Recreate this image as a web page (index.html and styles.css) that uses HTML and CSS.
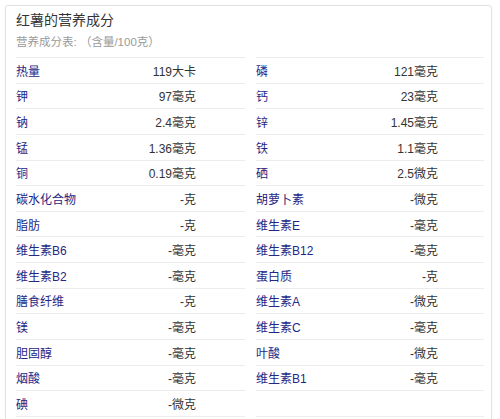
FILE: index.html
```html
<!DOCTYPE html>
<html lang="zh">
<head>
<meta charset="utf-8">
<title>红薯的营养成分</title>
<link rel="stylesheet" href="styles.css">
</head>
<body>
<div class="card">
  <h2 class="title">红薯的营养成分</h2>
  <div class="subtitle">营养成分表: （含量/100克）</div>
  <div class="table">
    <div class="col">
      <div class="row"><span class="k">热量</span><span class="v">119大卡</span></div>
      <div class="row"><span class="k">钾</span><span class="v">97毫克</span></div>
      <div class="row"><span class="k">钠</span><span class="v">2.4毫克</span></div>
      <div class="row"><span class="k">锰</span><span class="v">1.36毫克</span></div>
      <div class="row"><span class="k">铜</span><span class="v">0.19毫克</span></div>
      <div class="row"><span class="k">碳水化合物</span><span class="v">-克</span></div>
      <div class="row"><span class="k">脂肪</span><span class="v">-克</span></div>
      <div class="row"><span class="k">维生素B6</span><span class="v">-毫克</span></div>
      <div class="row"><span class="k">维生素B2</span><span class="v">-毫克</span></div>
      <div class="row"><span class="k">膳食纤维</span><span class="v">-克</span></div>
      <div class="row"><span class="k">镁</span><span class="v">-毫克</span></div>
      <div class="row"><span class="k">胆固醇</span><span class="v">-毫克</span></div>
      <div class="row"><span class="k">烟酸</span><span class="v">-毫克</span></div>
      <div class="row"><span class="k">碘</span><span class="v">-微克</span></div>
    </div>
    <div class="col col-right">
      <div class="row"><span class="k">磷</span><span class="v">121毫克</span></div>
      <div class="row"><span class="k">钙</span><span class="v">23毫克</span></div>
      <div class="row"><span class="k">锌</span><span class="v">1.45毫克</span></div>
      <div class="row"><span class="k">铁</span><span class="v">1.1毫克</span></div>
      <div class="row"><span class="k">硒</span><span class="v">2.5微克</span></div>
      <div class="row"><span class="k">胡萝卜素</span><span class="v">-微克</span></div>
      <div class="row"><span class="k">维生素E</span><span class="v">-毫克</span></div>
      <div class="row"><span class="k">维生素B12</span><span class="v">-毫克</span></div>
      <div class="row"><span class="k">蛋白质</span><span class="v">-克</span></div>
      <div class="row"><span class="k">维生素A</span><span class="v">-微克</span></div>
      <div class="row"><span class="k">维生素C</span><span class="v">-毫克</span></div>
      <div class="row"><span class="k">叶酸</span><span class="v">-微克</span></div>
      <div class="row"><span class="k">维生素B1</span><span class="v">-毫克</span></div>
      <div class="row"><span class="k"></span><span class="v"></span></div>
    </div>
  </div>
</div>
</body>
</html>
```
FILE: styles.css
```css
html, body {
  margin: 0;
  padding: 0;
  background: #ffffff;
}
body {
  font-family: "Liberation Sans", Arial, "Noto Sans CJK SC", sans-serif;
  color: #333333;
}
.card {
  margin: 5px 0 0 5px;
  width: 487px;
  min-height: 430px;
  border: 1px solid #e3e3e3;
  border-radius: 3px 4px 0 0;
  box-shadow: 0 0 2px rgba(0, 0, 0, 0.06);
  padding: 3px 0 0 10px;
  box-sizing: border-box;
  background: #fff;
}
.title {
  margin: 0;
  font-size: 14px;
  line-height: 23px;
  font-weight: normal;
  color: #333333;
}
.subtitle {
  font-size: 11.5px;
  line-height: 20px;
  color: #9a9a9a;
  margin-bottom: 5px;
}
.table {
  display: grid;
  grid-template-columns: 229px 228px;
  column-gap: 11px;
}
.col {
  border-top: 1px solid #ececec;
}
.row {
  display: flex;
  align-items: center;
  height: 25.64px;
  box-sizing: border-box;
  border-bottom: 1px solid #ececec;
  font-size: 12px;
}
.k {
  flex: 1;
  color: #262684;
}
.v {
  padding-right: 49px;
  text-align: right;
  color: #333333;
}
.col-right .v {
  padding-right: 46px;
}
```
